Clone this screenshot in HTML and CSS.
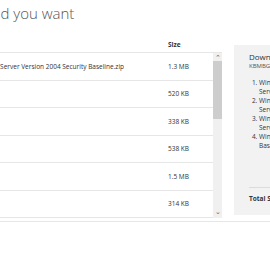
FILE: index.html
```html
<!DOCTYPE html>
<html lang="en">

<head>
    <meta charset="UTF-8">
    <title>Choose the download you want</title>
    <link rel="stylesheet" href="styles.css">
</head>

<body>
    <div class="page">
        <h1 class="title">Choose the download you want</h1>

        <div class="content">
            <div class="files">
                <div class="files-head">
                    <div class="col-check"></div>
                    <div class="col-name">File Name</div>
                    <div class="col-size">Size</div>
                    <div class="col-bar"></div>
                </div>
                <div class="files-body">
                    <div class="rows">
                        <div class="row">
                            <div class="col-check"></div>
                            <div class="col-name">Windows 10 Version 2004 and Windows Server Version 2004 Security Baseline.zip</div>
                            <div class="col-size">1.3 MB</div>
                        </div>
                        <div class="row">
                            <div class="col-check"></div>
                            <div class="col-name">LGPO.zip</div>
                            <div class="col-size">520 KB</div>
                        </div>
                        <div class="row">
                            <div class="col-check"></div>
                            <div class="col-name">PolicyAnalyzer.zip</div>
                            <div class="col-size">338 KB</div>
                        </div>
                        <div class="row">
                            <div class="col-check"></div>
                            <div class="col-name">SetObjectSecurity.zip</div>
                            <div class="col-size">538 KB</div>
                        </div>
                        <div class="row">
                            <div class="col-check"></div>
                            <div class="col-name">Office365-Baseline.zip</div>
                            <div class="col-size">1.5 MB</div>
                        </div>
                        <div class="row">
                            <div class="col-check"></div>
                            <div class="col-name">Edge-v85-Baseline.zip</div>
                            <div class="col-size">314 KB</div>
                        </div>
                    </div>
                    <div class="scrollbar">
                        <div class="scroll-arrow">&#8963;</div>
                        <div class="scroll-track">
                            <div class="scroll-thumb"></div>
                        </div>
                        <div class="scroll-arrow down">&#8964;</div>
                    </div>
                </div>
            </div>

            <aside class="summary">
                <div class="summary-title">Download Summary:</div>
                <div class="summary-units">KBMBGB</div>
                <ol class="summary-list">
                    <li>Windows 10 Version 2004 and Windows Server Version 2004 Security Baseline.zip</li>
                    <li>Windows 10 Version 1909 and Windows Server Version 1909 Security Baseline.zip</li>
                    <li>Windows 10 Version 1809 and Windows Server 2019 Security Baseline.zip</li>
                    <li>Windows 10 Version 1803 Security Baseline.zip</li>
                </ol>
                <div class="summary-total">Total Size: 0</div>
            </aside>
        </div>
    </div>
</body>

</html>
```

FILE: styles.css
```css
body {
    margin: 0;
    overflow: hidden;
    font-family: "Segoe UI", "Open Sans", sans-serif;
    color: #333;
    background: #fff;
}

.page {
    margin-left: -160px;
    width: 600px;
}

.title {
    margin: 0 0 0 22px;
    padding-top: 3px;
    height: 33px;
    font-size: 15px;
    font-weight: 300;
    color: #555;
    white-space: nowrap;
}

.content {
    display: flex;
    gap: 12px;
    padding-bottom: 3px;
    border-bottom: 1px solid #e6e6e6;
}

.files {
    width: 382px;
}

.files-head {
    display: flex;
    height: 16px;
    align-items: center;
    border-bottom: 1px solid #e6e6e6;
    font-size: 6.5px;
    font-weight: 700;
}

.col-check {
    width: 22px;
}

.row .col-check {
    width: 38px;
}

.col-name {
    flex: 1;
    white-space: nowrap;
}

.col-size {
    width: 45px;
}

.col-bar {
    width: 9px;
}

.files-body {
    display: flex;
    height: 165px;
}

.rows {
    flex: 1;
    overflow: hidden;
}

.row {
    display: flex;
    align-items: center;
    height: 26.5px;
    border-bottom: 1px solid #e6e6e6;
    font-size: 6.5px;
}

.scrollbar {
    width: 9px;
    display: flex;
    flex-direction: column;
    background: #f0f0f0;
}

.scroll-arrow {
    height: 8px;
    font-size: 7px;
    line-height: 10px;
    text-align: center;
    color: #666;
}

.scroll-arrow.down {
    line-height: 4px;
}

.scroll-track {
    flex: 1;
}

.scroll-thumb {
    height: 58px;
    background: #cdcdcd;
}

.summary {
    width: 200px;
    height: 170px;
    margin-top: 9px;
    padding: 6px 15px 0;
    box-sizing: border-box;
    background: #f2f2f2;
    display: flex;
    flex-direction: column;
    font-size: 6.5px;
}

.summary-title {
    font-size: 8px;
    white-space: nowrap;
}

.summary-units {
    font-size: 6px;
    color: #555;
}

.summary-list {
    margin: 8px 0 0;
    padding-left: 10px;
    width: 128px;
    line-height: 9px;
}

.summary-total {
    margin-top: auto;
    margin-bottom: 12px;
    padding-top: 6px;
    border-top: 1px solid #dcdcdc;
    font-weight: 700;
    white-space: nowrap;
}
```
